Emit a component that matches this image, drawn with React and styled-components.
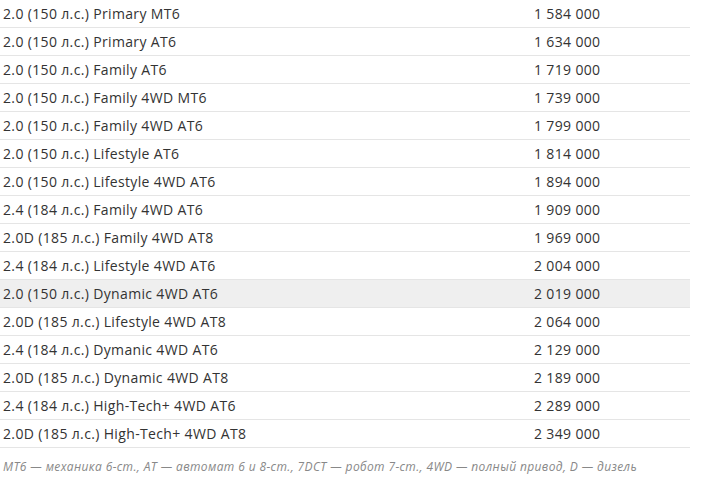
import React from "react";
import styled, { createGlobalStyle } from "styled-components";

const Global = createGlobalStyle`
  html, body { margin: 0; padding: 0; background: #fff; }
  body { font-family: "Open Sans", "Noto Sans", sans-serif; color: #333; }
`;

const Table = styled.div`
  width: 690px;
  display: flex;
  flex-direction: column;
`;

const Row = styled.div`
  display: grid;
  grid-template-columns: 531px 1fr;
  height: 27px;
  align-items: center;
  border-bottom: 1px solid #e5e5e5;
  background: ${(p) => (p.$hl ? "#efefef" : "transparent")};
  font-size: 14px;
  letter-spacing: 0.35px;
`;

const Cell = styled.div`
  padding-left: 3px;
  padding-bottom: 1px;
  white-space: nowrap;
`;

const Note = styled.p`
  margin: 0;
  padding: 10px 0 0 3px;
  font-size: 12px;
  letter-spacing: 0.38px;
  font-style: italic;
  color: #888;
`;

const rows = [
  ["2.0 (150 л.с.) Primary MT6", "1 584 000"],
  ["2.0 (150 л.с.) Primary AT6", "1 634 000"],
  ["2.0 (150 л.с.) Family AT6", "1 719 000"],
  ["2.0 (150 л.с.) Family 4WD MT6", "1 739 000"],
  ["2.0 (150 л.с.) Family 4WD AT6", "1 799 000"],
  ["2.0 (150 л.с.) Lifestyle AT6", "1 814 000"],
  ["2.0 (150 л.с.) Lifestyle 4WD AT6", "1 894 000"],
  ["2.4 (184 л.с.) Family 4WD AT6", "1 909 000"],
  ["2.0D (185 л.с.) Family 4WD AT8", "1 969 000"],
  ["2.4 (184 л.с.) Lifestyle 4WD AT6", "2 004 000"],
  ["2.0 (150 л.с.) Dynamic 4WD AT6", "2 019 000"],
  ["2.0D (185 л.с.) Lifestyle 4WD AT8", "2 064 000"],
  ["2.4 (184 л.с.) Dymanic 4WD AT6", "2 129 000"],
  ["2.0D (185 л.с.) Dynamic 4WD AT8", "2 189 000"],
  ["2.4 (184 л.с.) High-Tech+ 4WD AT6", "2 289 000"],
  ["2.0D (185 л.с.) High-Tech+ 4WD AT8", "2 349 000"],
];

export default function App() {
  return (
    <>
      <Global />
      <Table>
        {rows.map(([name, price], i) => (
          <Row key={i} $hl={i === 10}>
            <Cell>{name}</Cell>
            <Cell>{price}</Cell>
          </Row>
        ))}
      </Table>
      <Note>
        MT6 — механика 6-ст., AT — автомат 6 и 8-ст., 7DCT — робот 7-ст., 4WD — полный привод, D — дизель
      </Note>
    </>
  );
}
